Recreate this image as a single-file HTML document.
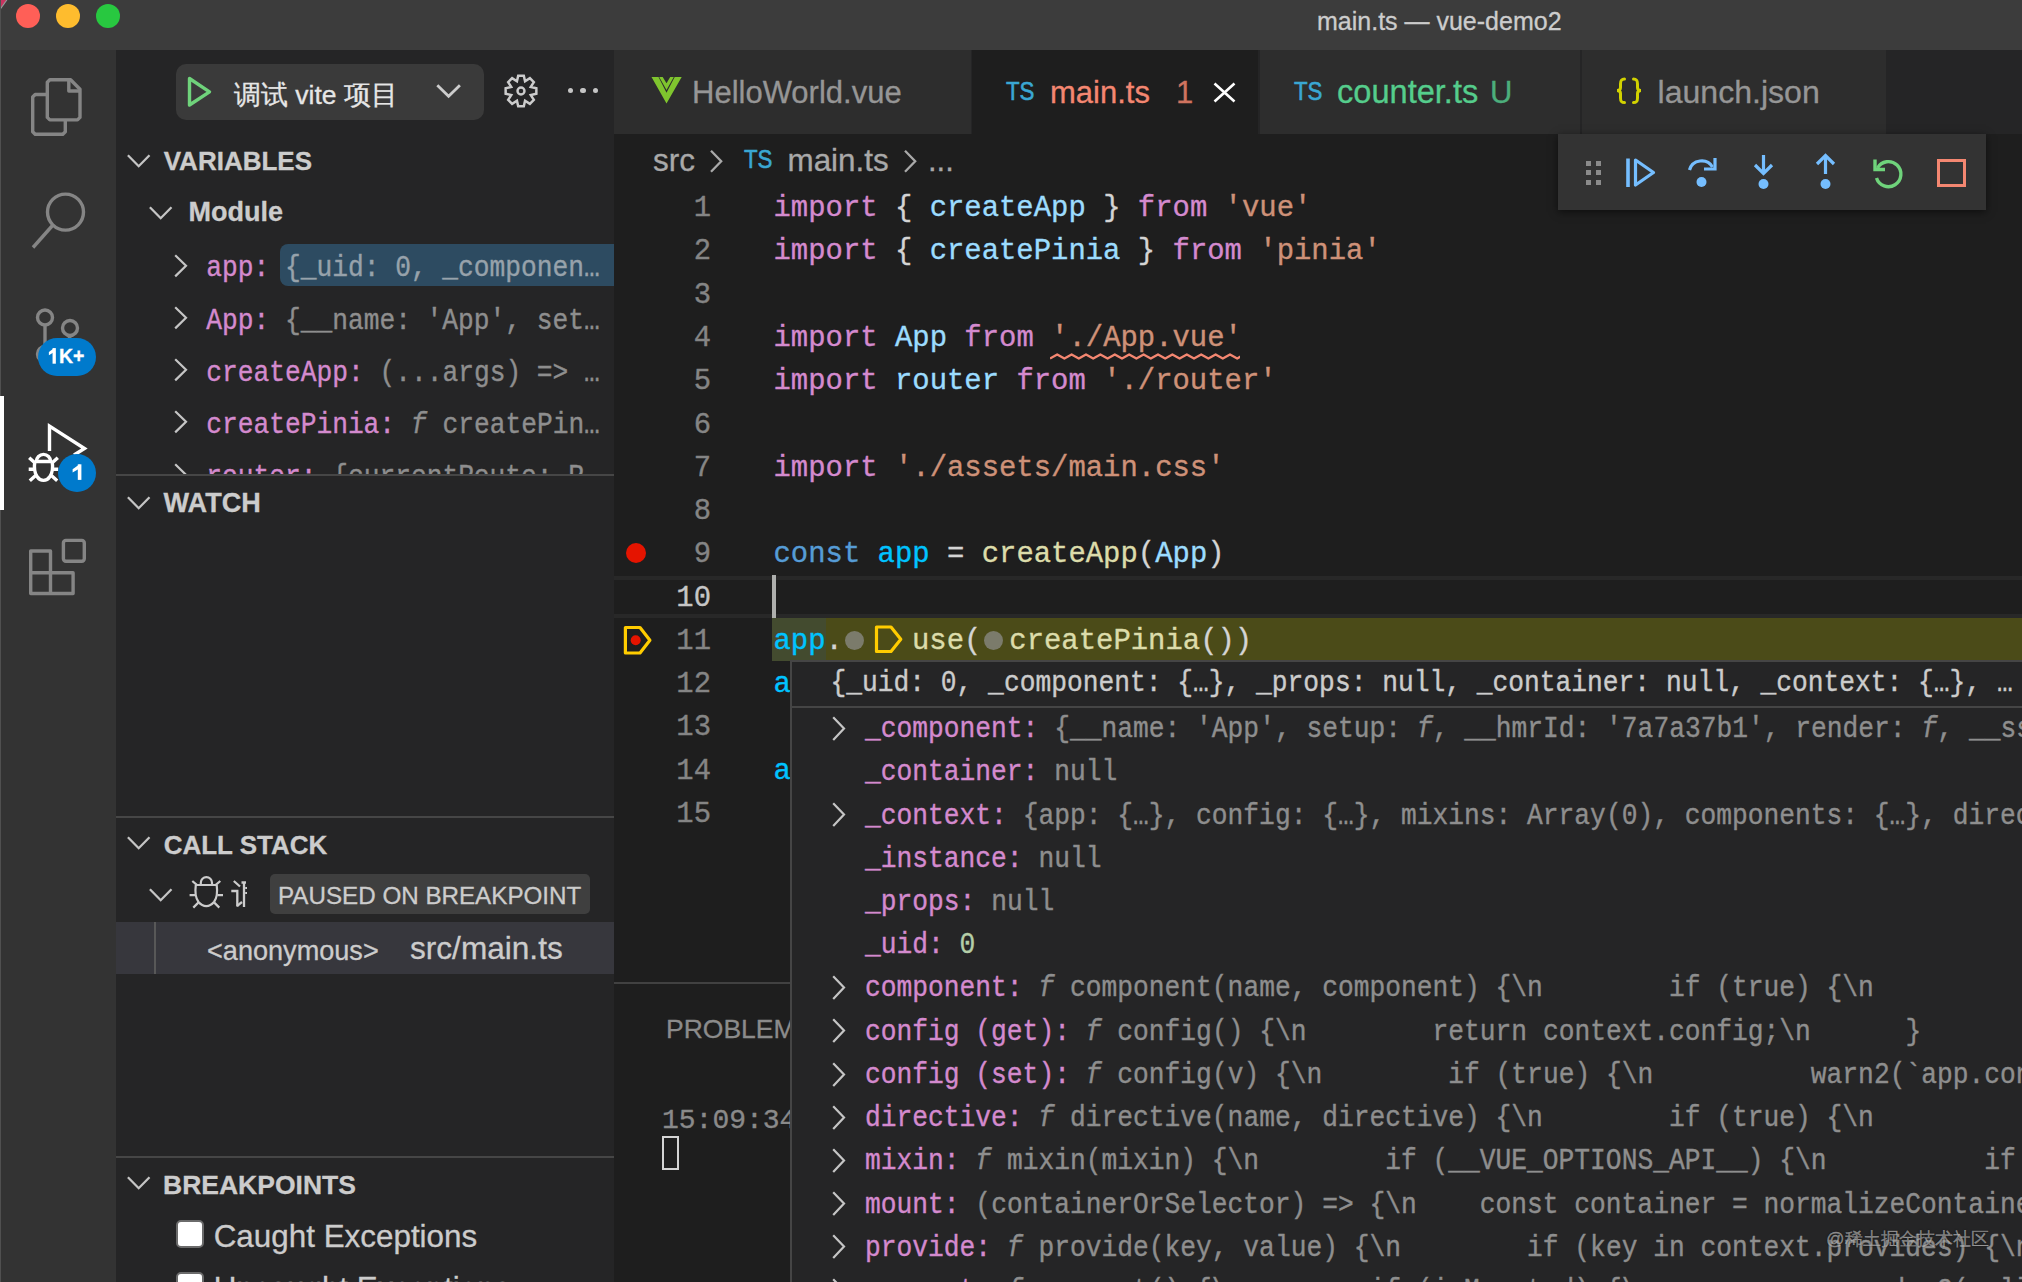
<!DOCTYPE html><html><head><meta charset="utf-8"><title>main.ts — vue-demo2</title><style>
html,body{margin:0;padding:0;}body{width:2022px;height:1282px;overflow:hidden;position:relative;background:#1e1e1e;}
.t{position:absolute;white-space:pre;}.s{font-family:"Liberation Sans",sans-serif;-webkit-text-stroke:0.3px currentColor;}.m{font-family:"Liberation Mono",monospace;-webkit-text-stroke:0.35px currentColor;}.r{position:absolute;}
</style></head><body>
<div class="r" style="left:0px;top:0px;width:2022px;height:50px;background:#3c3c3c;"></div>
<svg class="r" style="left:0px;top:0px;" width="12" height="12" viewBox="0 0 12 12"><polygon points="0,0 6.5,0 0,9" fill="#c8325f"/><path d="M6.8 0 L0 9.5" stroke="#9a9a9a" stroke-width="1.2"/></svg>
<div class="r" style="left:0px;top:50px;width:116px;height:1232px;background:#333333;"></div>
<div class="r" style="left:116px;top:50px;width:498px;height:1232px;background:#252526;"></div>
<div class="r" style="left:614px;top:50px;width:1408px;height:84px;background:#252526;"></div>
<div class="r" style="left:614px;top:134px;width:1408px;height:1148px;background:#1e1e1e;"></div>
<div class="r" style="left:0px;top:0px;width:1px;height:1282px;background:#505050;"></div>
<div class="r" style="left:16px;top:4px;width:24px;height:24px;border-radius:50%;background:#ff5f57;"></div>
<div class="r" style="left:56px;top:4px;width:24px;height:24px;border-radius:50%;background:#febc2e;"></div>
<div class="r" style="left:96px;top:4px;width:24px;height:24px;border-radius:50%;background:#28c840;"></div>
<div class="t s" style="left:1317.00px;top:8.93px;font-size:25px;line-height:25px;color:#cccccc;">main.ts — vue-demo2</div>
<div class="r" style="left:614px;top:50px;width:356.5px;height:84px;background:#2d2d2d;"></div>
<div class="r" style="left:972px;top:50px;width:285.5px;height:84px;background:#1e1e1e;"></div>
<div class="r" style="left:1260px;top:50px;width:320px;height:84px;background:#2d2d2d;"></div>
<div class="r" style="left:1582px;top:50px;width:304px;height:84px;background:#2d2d2d;"></div>
<div class="t s" style="left:692.00px;top:76.95px;font-size:31px;line-height:31px;color:#969696;">HelloWorld.vue</div>
<div class="t s" style="left:1050.00px;top:76.95px;font-size:31px;line-height:31px;color:#f48771;">main.ts</div>
<div class="t s" style="left:1176.00px;top:76.95px;font-size:31px;line-height:31px;color:#d0735f;">1</div>
<div class="t s" style="left:1337.00px;top:75.80px;font-size:32.6px;line-height:32.6px;color:#55cd8c;">counter.ts</div>
<div class="t s" style="left:1490.00px;top:77.15px;font-size:31px;line-height:31px;color:#4cae7c;">U</div>
<div class="t s" style="left:1657.50px;top:76.02px;font-size:32.1px;line-height:32.1px;color:#969696;">launch.json</div>
<div class="t s" style="left:653.00px;top:145.03px;font-size:31.5px;line-height:31.5px;color:#a9a9a9;">src</div>
<div class="t s" style="left:787.50px;top:145.11px;font-size:31.4px;line-height:31.4px;color:#a9a9a9;">main.ts</div>
<div class="t s" style="left:928.00px;top:145.45px;font-size:31px;line-height:31px;color:#a9a9a9;">...</div>
<div class="r" style="left:176px;top:64px;width:308px;height:56px;background:#3a3a3a;border-radius:10px;"></div>
<div class="t s" style="left:234.00px;top:82.06px;font-size:26.5px;line-height:26.5px;color:#e6e6e6;">调试 vite 项目</div>
<div class="t s" style="left:163.70px;top:147.99px;font-size:26px;line-height:26px;color:#cccccc;font-weight:700;">VARIABLES</div>
<div class="t s" style="left:188.50px;top:199.14px;font-size:27px;line-height:27px;color:#cccccc;font-weight:700;">Module</div>
<div class="r" style="left:116px;top:474px;width:498px;height:2px;background:#464646;"></div>
<div class="t s" style="left:163.50px;top:489.35px;font-size:27.1px;line-height:27.1px;color:#cccccc;font-weight:700;">WATCH</div>
<div class="r" style="left:116px;top:816px;width:498px;height:2px;background:#464646;"></div>
<div class="t s" style="left:163.70px;top:832.39px;font-size:26px;line-height:26px;color:#cccccc;font-weight:700;">CALL STACK</div>
<div class="r" style="left:270px;top:874px;width:320px;height:40px;background:#3f3f3f;border-radius:5px;"></div>
<div class="t s" style="left:278.00px;top:883.51px;font-size:24.2px;line-height:24.2px;color:#cccccc;">PAUSED ON BREAKPOINT</div>
<div class="r" style="left:116px;top:922px;width:498px;height:52px;background:#37373d;"></div>
<div class="r" style="left:154px;top:922px;width:2px;height:52px;background:#585858;"></div>
<div class="t s" style="left:207.00px;top:936.55px;font-size:27.1px;line-height:27.1px;color:#cccccc;">&lt;anonymous&gt;</div>
<div class="t s" style="left:410.00px;top:932.74px;font-size:31.6px;line-height:31.6px;color:#cccccc;">src/main.ts</div>
<div class="r" style="left:116px;top:1156px;width:498px;height:2px;background:#464646;"></div>
<div class="t s" style="left:163.00px;top:1171.96px;font-size:26.5px;line-height:26.5px;color:#cccccc;font-weight:700;">BREAKPOINTS</div>
<div class="t s" style="left:213.70px;top:1221.41px;font-size:31.4px;line-height:31.4px;color:#cccccc;">Caught Exceptions</div>
<div class="t s" style="left:213.70px;top:1273.41px;font-size:31.4px;line-height:31.4px;color:#cccccc;">Uncaught Exceptions</div>
<div class="r" style="left:176px;top:1220px;width:24px;height:24px;background:#fff;border:2px solid #6b6b6b;border-radius:5px;"></div>
<div class="r" style="left:176px;top:1272px;width:24px;height:24px;background:#fff;border:2px solid #6b6b6b;border-radius:5px;"></div>
<div class="r" style="left:614px;top:576px;width:1408px;height:3.6px;background:#282828;"></div>
<div class="r" style="left:614px;top:614px;width:1408px;height:3.8px;background:#282828;"></div>
<div class="r" style="left:772.2px;top:618.0px;width:1249.8px;height:43.27px;background:#4b4b18;"></div>
<div class="r" style="left:772.2px;top:618.0px;width:53.39999999999998px;height:43.27px;background:#434b2f;"></div>
<div class="t m" style="left:773.50px;top:195.15px;font-size:28.91px;line-height:28.91px;color:#d48ace;">import</div>
<div class="t m" style="left:894.95px;top:195.15px;font-size:28.91px;line-height:28.91px;color:#d4d4d4;">{</div>
<div class="t m" style="left:929.65px;top:195.15px;font-size:28.91px;line-height:28.91px;color:#9cdcfe;">createApp</div>
<div class="t m" style="left:1103.15px;top:195.15px;font-size:28.91px;line-height:28.91px;color:#d4d4d4;">}</div>
<div class="t m" style="left:1137.85px;top:195.15px;font-size:28.91px;line-height:28.91px;color:#d48ace;">from</div>
<div class="t m" style="left:1224.60px;top:195.15px;font-size:28.91px;line-height:28.91px;color:#ce9178;">&#x27;vue&#x27;</div>
<div class="t m" style="left:773.50px;top:238.42px;font-size:28.91px;line-height:28.91px;color:#d48ace;">import</div>
<div class="t m" style="left:894.95px;top:238.42px;font-size:28.91px;line-height:28.91px;color:#d4d4d4;">{</div>
<div class="t m" style="left:929.65px;top:238.42px;font-size:28.91px;line-height:28.91px;color:#9cdcfe;">createPinia</div>
<div class="t m" style="left:1137.85px;top:238.42px;font-size:28.91px;line-height:28.91px;color:#d4d4d4;">}</div>
<div class="t m" style="left:1172.55px;top:238.42px;font-size:28.91px;line-height:28.91px;color:#d48ace;">from</div>
<div class="t m" style="left:1259.30px;top:238.42px;font-size:28.91px;line-height:28.91px;color:#ce9178;">&#x27;pinia&#x27;</div>
<div class="t m" style="left:773.50px;top:324.96px;font-size:28.91px;line-height:28.91px;color:#d48ace;">import</div>
<div class="t m" style="left:894.95px;top:324.96px;font-size:28.91px;line-height:28.91px;color:#9cdcfe;">App</div>
<div class="t m" style="left:964.35px;top:324.96px;font-size:28.91px;line-height:28.91px;color:#d48ace;">from</div>
<div class="t m" style="left:1051.10px;top:324.96px;font-size:28.91px;line-height:28.91px;color:#ce9178;">&#x27;./App.vue&#x27;</div>
<div class="t m" style="left:773.50px;top:368.23px;font-size:28.91px;line-height:28.91px;color:#d48ace;">import</div>
<div class="t m" style="left:894.95px;top:368.23px;font-size:28.91px;line-height:28.91px;color:#9cdcfe;">router</div>
<div class="t m" style="left:1016.40px;top:368.23px;font-size:28.91px;line-height:28.91px;color:#d48ace;">from</div>
<div class="t m" style="left:1103.15px;top:368.23px;font-size:28.91px;line-height:28.91px;color:#ce9178;">&#x27;./router&#x27;</div>
<div class="t m" style="left:773.50px;top:454.77px;font-size:28.91px;line-height:28.91px;color:#d48ace;">import</div>
<div class="t m" style="left:894.95px;top:454.77px;font-size:28.91px;line-height:28.91px;color:#ce9178;">&#x27;./assets/main.css&#x27;</div>
<div class="t m" style="left:773.50px;top:541.31px;font-size:28.91px;line-height:28.91px;color:#569cd6;">const</div>
<div class="t m" style="left:877.60px;top:541.31px;font-size:28.91px;line-height:28.91px;color:#00c3ff;">app</div>
<div class="t m" style="left:947.00px;top:541.31px;font-size:28.91px;line-height:28.91px;color:#d4d4d4;">=</div>
<div class="t m" style="left:981.70px;top:541.31px;font-size:28.91px;line-height:28.91px;color:#dcdcaa;">createApp</div>
<div class="t m" style="left:1137.85px;top:541.31px;font-size:28.91px;line-height:28.91px;color:#d4d4d4;">(</div>
<div class="t m" style="left:1155.20px;top:541.31px;font-size:28.91px;line-height:28.91px;color:#9cdcfe;">App</div>
<div class="t m" style="left:1207.25px;top:541.31px;font-size:28.91px;line-height:28.91px;color:#d4d4d4;">)</div>
<div class="t m" style="left:773.50px;top:671.12px;font-size:28.91px;line-height:28.91px;color:#00c3ff;">a</div>
<div class="t m" style="left:773.50px;top:757.66px;font-size:28.91px;line-height:28.91px;color:#00c3ff;">a</div>
<div class="t m" style="left:773.50px;top:627.85px;font-size:28.91px;line-height:28.91px;color:#00c3ff;">app</div>
<div class="t m" style="left:825.55px;top:627.85px;font-size:28.91px;line-height:28.91px;color:#d4d4d4;">.</div>
<div class="t m" style="left:912.00px;top:627.85px;font-size:28.91px;line-height:28.91px;color:#dcdcaa;">use</div>
<div class="t m" style="left:964.05px;top:627.85px;font-size:28.91px;line-height:28.91px;color:#d4d4d4;">(</div>
<div class="t m" style="left:1009.30px;top:627.85px;font-size:28.91px;line-height:28.91px;color:#dcdcaa;">createPinia</div>
<div class="t m" style="left:1200.15px;top:627.85px;font-size:28.91px;line-height:28.91px;color:#d4d4d4;">())</div>
<div class="t m" style="left:511px;width:200px;text-align:right;top:195.15px;font-size:28.91px;line-height:28.91px;color:#858585;">1</div>
<div class="t m" style="left:511px;width:200px;text-align:right;top:238.42px;font-size:28.91px;line-height:28.91px;color:#858585;">2</div>
<div class="t m" style="left:511px;width:200px;text-align:right;top:281.69px;font-size:28.91px;line-height:28.91px;color:#858585;">3</div>
<div class="t m" style="left:511px;width:200px;text-align:right;top:324.96px;font-size:28.91px;line-height:28.91px;color:#858585;">4</div>
<div class="t m" style="left:511px;width:200px;text-align:right;top:368.23px;font-size:28.91px;line-height:28.91px;color:#858585;">5</div>
<div class="t m" style="left:511px;width:200px;text-align:right;top:411.50px;font-size:28.91px;line-height:28.91px;color:#858585;">6</div>
<div class="t m" style="left:511px;width:200px;text-align:right;top:454.77px;font-size:28.91px;line-height:28.91px;color:#858585;">7</div>
<div class="t m" style="left:511px;width:200px;text-align:right;top:498.04px;font-size:28.91px;line-height:28.91px;color:#858585;">8</div>
<div class="t m" style="left:511px;width:200px;text-align:right;top:541.31px;font-size:28.91px;line-height:28.91px;color:#858585;">9</div>
<div class="t m" style="left:511px;width:200px;text-align:right;top:584.58px;font-size:28.91px;line-height:28.91px;color:#c6c6c6;">10</div>
<div class="t m" style="left:511px;width:200px;text-align:right;top:627.85px;font-size:28.91px;line-height:28.91px;color:#858585;">11</div>
<div class="t m" style="left:511px;width:200px;text-align:right;top:671.12px;font-size:28.91px;line-height:28.91px;color:#858585;">12</div>
<div class="t m" style="left:511px;width:200px;text-align:right;top:714.39px;font-size:28.91px;line-height:28.91px;color:#858585;">13</div>
<div class="t m" style="left:511px;width:200px;text-align:right;top:757.66px;font-size:28.91px;line-height:28.91px;color:#858585;">14</div>
<div class="t m" style="left:511px;width:200px;text-align:right;top:800.93px;font-size:28.91px;line-height:28.91px;color:#858585;">15</div>
<div class="r" style="left:772.2px;top:574.73px;width:3.5px;height:43.27px;background:#aeafad;"></div>
<div class="r" style="left:626px;top:542.5px;width:20px;height:20px;border-radius:50%;background:#e51400;"></div>
<svg class="r" style="left:620px;top:622px;" width="36" height="38" viewBox="0 0 36 38"><path d="M5.4 5.5 H20 L29.9 18.25 L20 31 H5.4 Z" fill="none" stroke="#ffcc00" stroke-width="3.2" stroke-linejoin="round"/><circle cx="15.7" cy="18.2" r="5" fill="#e51400"/></svg>
<div class="r" style="left:845.4px;top:631px;width:19px;height:19px;border-radius:50%;background:#7b7b6b;"></div>
<div class="r" style="left:984px;top:631px;width:19px;height:19px;border-radius:50%;background:#7b7b6b;"></div>
<svg class="r" style="left:872px;top:622px;" width="36" height="36" viewBox="0 0 36 36"><path d="M4.5 5 H19 L28.8 17.25 L19 29.5 H4.5 Z" fill="none" stroke="#ffcc00" stroke-width="3.2" stroke-linejoin="round"/></svg>
<svg class="r" style="left:1050px;top:353px;overflow:hidden;" width="190" height="8" viewBox="0 0 190 8"><path d="M0 5.5 L7.20 1.5 L14.40 5.5 L21.60 1.5 L28.80 5.5 L36.00 1.5 L43.20 5.5 L50.40 1.5 L57.60 5.5 L64.80 1.5 L72.00 5.5 L79.20 1.5 L86.40 5.5 L93.60 1.5 L100.80 5.5 L108.00 1.5 L115.20 5.5 L122.40 1.5 L129.60 5.5 L136.80 1.5 L144.00 5.5 L151.20 1.5 L158.40 5.5 L165.60 1.5 L172.80 5.5 L180.00 1.5 L187.20 5.5 L194.40 1.5" fill="none" stroke="#f48771" stroke-width="2.4" stroke-linejoin="round"/></svg>
<div class="r" style="left:614px;top:982px;width:176px;height:2px;background:#414141;"></div>
<div class="t s" style="left:666.00px;top:1015.86px;font-size:26.5px;line-height:26.5px;color:#8b8b8b;">PROBLEM</div>
<div class="t m" style="left:662.00px;top:1107.15px;font-size:28px;line-height:28px;color:#8a8a8a;">15:09:34</div>
<div class="r" style="left:661.8px;top:1136.3px;width:17.3px;height:33.4px;box-sizing:border-box;border:2px solid #d4d4d4;"></div>
<div class="r" style="left:790px;top:660px;width:1242px;height:632px;background:#252526;box-sizing:border-box;border:2px solid #454545;"></div>
<div class="r" style="left:790px;top:705.5px;width:1232px;height:2px;background:#454545;"></div>
<div class="t m" style="left:830.50px;top:671.37px;font-size:26.279056143205857px;line-height:26.279056143205857px;color:#cccccc;transform:scaleY(1.09);transform-origin:0 20.13px;">{_uid: 0, _component: {…}, _props: null, _container: null, _context: {…}, …</div>
<div class="t m" style="left:865.00px;top:717.17px;font-size:26.279056143205857px;line-height:26.279056143205857px;color:#d48ace;transform:scaleY(1.09);transform-origin:0 20.13px;">_component:</div>
<div class="t m" style="left:1038.47px;top:717.17px;font-size:26.279056143205857px;line-height:26.279056143205857px;color:#8e8e8e;transform:scaleY(1.09);transform-origin:0 20.13px;"> {__name: &#x27;App&#x27;, setup: </div>
<div class="t m" style="left:1416.95px;top:717.17px;font-size:26.279056143205857px;line-height:26.279056143205857px;color:#8e8e8e;font-style:italic;transform:scaleY(1.09);transform-origin:0 20.13px;">f</div>
<div class="t m" style="left:1432.72px;top:717.17px;font-size:26.279056143205857px;line-height:26.279056143205857px;color:#8e8e8e;transform:scaleY(1.09);transform-origin:0 20.13px;">, __hmrId: &#x27;7a7a37b1&#x27;, render: </div>
<div class="t m" style="left:1921.59px;top:717.17px;font-size:26.279056143205857px;line-height:26.279056143205857px;color:#8e8e8e;font-style:italic;transform:scaleY(1.09);transform-origin:0 20.13px;">f</div>
<div class="t m" style="left:1937.36px;top:717.17px;font-size:26.279056143205857px;line-height:26.279056143205857px;color:#8e8e8e;transform:scaleY(1.09);transform-origin:0 20.13px;">, __ssrCssVars</div>
<svg class="r" style="left:832px;top:715.8px;" width="15" height="26" viewBox="0 0 15 26"><path d="M1.2 1.2 L12 12.6 L1.2 24" fill="none" stroke="#c5c5c5" stroke-width="2.2"/></svg>
<div class="t m" style="left:865.00px;top:760.39px;font-size:26.279056143205857px;line-height:26.279056143205857px;color:#d48ace;transform:scaleY(1.09);transform-origin:0 20.13px;">_container:</div>
<div class="t m" style="left:1038.47px;top:760.39px;font-size:26.279056143205857px;line-height:26.279056143205857px;color:#8e8e8e;transform:scaleY(1.09);transform-origin:0 20.13px;"> null</div>
<div class="t m" style="left:865.00px;top:803.61px;font-size:26.279056143205857px;line-height:26.279056143205857px;color:#d48ace;transform:scaleY(1.09);transform-origin:0 20.13px;">_context:</div>
<div class="t m" style="left:1006.93px;top:803.61px;font-size:26.279056143205857px;line-height:26.279056143205857px;color:#8e8e8e;transform:scaleY(1.09);transform-origin:0 20.13px;"> {app: {…}, config: {…}, mixins: Array(0), components: {…}, directives: {…}</div>
<svg class="r" style="left:832px;top:802.24px;" width="15" height="26" viewBox="0 0 15 26"><path d="M1.2 1.2 L12 12.6 L1.2 24" fill="none" stroke="#c5c5c5" stroke-width="2.2"/></svg>
<div class="t m" style="left:865.00px;top:846.83px;font-size:26.279056143205857px;line-height:26.279056143205857px;color:#d48ace;transform:scaleY(1.09);transform-origin:0 20.13px;">_instance:</div>
<div class="t m" style="left:1022.70px;top:846.83px;font-size:26.279056143205857px;line-height:26.279056143205857px;color:#8e8e8e;transform:scaleY(1.09);transform-origin:0 20.13px;"> null</div>
<div class="t m" style="left:865.00px;top:890.05px;font-size:26.279056143205857px;line-height:26.279056143205857px;color:#d48ace;transform:scaleY(1.09);transform-origin:0 20.13px;">_props:</div>
<div class="t m" style="left:975.39px;top:890.05px;font-size:26.279056143205857px;line-height:26.279056143205857px;color:#8e8e8e;transform:scaleY(1.09);transform-origin:0 20.13px;"> null</div>
<div class="t m" style="left:865.00px;top:933.27px;font-size:26.279056143205857px;line-height:26.279056143205857px;color:#d48ace;transform:scaleY(1.09);transform-origin:0 20.13px;">_uid:</div>
<div class="t m" style="left:943.85px;top:933.27px;font-size:26.279056143205857px;line-height:26.279056143205857px;color:#8e8e8e;transform:scaleY(1.09);transform-origin:0 20.13px;"> </div>
<div class="t m" style="left:959.62px;top:933.27px;font-size:26.279056143205857px;line-height:26.279056143205857px;color:#b5cea8;transform:scaleY(1.09);transform-origin:0 20.13px;">0</div>
<div class="t m" style="left:865.00px;top:976.49px;font-size:26.279056143205857px;line-height:26.279056143205857px;color:#d48ace;transform:scaleY(1.09);transform-origin:0 20.13px;">component:</div>
<div class="t m" style="left:1022.70px;top:976.49px;font-size:26.279056143205857px;line-height:26.279056143205857px;color:#8e8e8e;transform:scaleY(1.09);transform-origin:0 20.13px;"> </div>
<div class="t m" style="left:1038.47px;top:976.49px;font-size:26.279056143205857px;line-height:26.279056143205857px;color:#8e8e8e;font-style:italic;transform:scaleY(1.09);transform-origin:0 20.13px;">f</div>
<div class="t m" style="left:1054.24px;top:976.49px;font-size:26.279056143205857px;line-height:26.279056143205857px;color:#8e8e8e;transform:scaleY(1.09);transform-origin:0 20.13px;"> component(name, component) {\n        if (true) {\n          validateComponentName</div>
<svg class="r" style="left:832px;top:975.1199999999999px;" width="15" height="26" viewBox="0 0 15 26"><path d="M1.2 1.2 L12 12.6 L1.2 24" fill="none" stroke="#c5c5c5" stroke-width="2.2"/></svg>
<div class="t m" style="left:865.00px;top:1019.71px;font-size:26.279056143205857px;line-height:26.279056143205857px;color:#d48ace;transform:scaleY(1.09);transform-origin:0 20.13px;">config (get):</div>
<div class="t m" style="left:1070.01px;top:1019.71px;font-size:26.279056143205857px;line-height:26.279056143205857px;color:#8e8e8e;transform:scaleY(1.09);transform-origin:0 20.13px;"> </div>
<div class="t m" style="left:1085.78px;top:1019.71px;font-size:26.279056143205857px;line-height:26.279056143205857px;color:#8e8e8e;font-style:italic;transform:scaleY(1.09);transform-origin:0 20.13px;">f</div>
<div class="t m" style="left:1101.55px;top:1019.71px;font-size:26.279056143205857px;line-height:26.279056143205857px;color:#8e8e8e;transform:scaleY(1.09);transform-origin:0 20.13px;"> config() {\n        return context.config;\n      }</div>
<svg class="r" style="left:832px;top:1018.3399999999999px;" width="15" height="26" viewBox="0 0 15 26"><path d="M1.2 1.2 L12 12.6 L1.2 24" fill="none" stroke="#c5c5c5" stroke-width="2.2"/></svg>
<div class="t m" style="left:865.00px;top:1062.93px;font-size:26.279056143205857px;line-height:26.279056143205857px;color:#d48ace;transform:scaleY(1.09);transform-origin:0 20.13px;">config (set):</div>
<div class="t m" style="left:1070.01px;top:1062.93px;font-size:26.279056143205857px;line-height:26.279056143205857px;color:#8e8e8e;transform:scaleY(1.09);transform-origin:0 20.13px;"> </div>
<div class="t m" style="left:1085.78px;top:1062.93px;font-size:26.279056143205857px;line-height:26.279056143205857px;color:#8e8e8e;font-style:italic;transform:scaleY(1.09);transform-origin:0 20.13px;">f</div>
<div class="t m" style="left:1101.55px;top:1062.93px;font-size:26.279056143205857px;line-height:26.279056143205857px;color:#8e8e8e;transform:scaleY(1.09);transform-origin:0 20.13px;"> config(v) {\n        if (true) {\n          warn2(`app.config cannot be replaced</div>
<svg class="r" style="left:832px;top:1061.56px;" width="15" height="26" viewBox="0 0 15 26"><path d="M1.2 1.2 L12 12.6 L1.2 24" fill="none" stroke="#c5c5c5" stroke-width="2.2"/></svg>
<div class="t m" style="left:865.00px;top:1106.15px;font-size:26.279056143205857px;line-height:26.279056143205857px;color:#d48ace;transform:scaleY(1.09);transform-origin:0 20.13px;">directive:</div>
<div class="t m" style="left:1022.70px;top:1106.15px;font-size:26.279056143205857px;line-height:26.279056143205857px;color:#8e8e8e;transform:scaleY(1.09);transform-origin:0 20.13px;"> </div>
<div class="t m" style="left:1038.47px;top:1106.15px;font-size:26.279056143205857px;line-height:26.279056143205857px;color:#8e8e8e;font-style:italic;transform:scaleY(1.09);transform-origin:0 20.13px;">f</div>
<div class="t m" style="left:1054.24px;top:1106.15px;font-size:26.279056143205857px;line-height:26.279056143205857px;color:#8e8e8e;transform:scaleY(1.09);transform-origin:0 20.13px;"> directive(name, directive) {\n        if (true) {\n          validateDirectiveName</div>
<svg class="r" style="left:832px;top:1104.78px;" width="15" height="26" viewBox="0 0 15 26"><path d="M1.2 1.2 L12 12.6 L1.2 24" fill="none" stroke="#c5c5c5" stroke-width="2.2"/></svg>
<div class="t m" style="left:865.00px;top:1149.37px;font-size:26.279056143205857px;line-height:26.279056143205857px;color:#d48ace;transform:scaleY(1.09);transform-origin:0 20.13px;">mixin:</div>
<div class="t m" style="left:959.62px;top:1149.37px;font-size:26.279056143205857px;line-height:26.279056143205857px;color:#8e8e8e;transform:scaleY(1.09);transform-origin:0 20.13px;"> </div>
<div class="t m" style="left:975.39px;top:1149.37px;font-size:26.279056143205857px;line-height:26.279056143205857px;color:#8e8e8e;font-style:italic;transform:scaleY(1.09);transform-origin:0 20.13px;">f</div>
<div class="t m" style="left:991.16px;top:1149.37px;font-size:26.279056143205857px;line-height:26.279056143205857px;color:#8e8e8e;transform:scaleY(1.09);transform-origin:0 20.13px;"> mixin(mixin) {\n        if (__VUE_OPTIONS_API__) {\n          if (!context.mixins</div>
<svg class="r" style="left:832px;top:1148.0px;" width="15" height="26" viewBox="0 0 15 26"><path d="M1.2 1.2 L12 12.6 L1.2 24" fill="none" stroke="#c5c5c5" stroke-width="2.2"/></svg>
<div class="t m" style="left:865.00px;top:1192.59px;font-size:26.279056143205857px;line-height:26.279056143205857px;color:#d48ace;transform:scaleY(1.09);transform-origin:0 20.13px;">mount:</div>
<div class="t m" style="left:959.62px;top:1192.59px;font-size:26.279056143205857px;line-height:26.279056143205857px;color:#8e8e8e;transform:scaleY(1.09);transform-origin:0 20.13px;"> (containerOrSelector) =&gt; {\n    const container = normalizeContainer(containerOrSelector)</div>
<svg class="r" style="left:832px;top:1191.2199999999998px;" width="15" height="26" viewBox="0 0 15 26"><path d="M1.2 1.2 L12 12.6 L1.2 24" fill="none" stroke="#c5c5c5" stroke-width="2.2"/></svg>
<div class="t m" style="left:865.00px;top:1235.81px;font-size:26.279056143205857px;line-height:26.279056143205857px;color:#d48ace;transform:scaleY(1.09);transform-origin:0 20.13px;">provide:</div>
<div class="t m" style="left:991.16px;top:1235.81px;font-size:26.279056143205857px;line-height:26.279056143205857px;color:#8e8e8e;transform:scaleY(1.09);transform-origin:0 20.13px;"> </div>
<div class="t m" style="left:1006.93px;top:1235.81px;font-size:26.279056143205857px;line-height:26.279056143205857px;color:#8e8e8e;font-style:italic;transform:scaleY(1.09);transform-origin:0 20.13px;">f</div>
<div class="t m" style="left:1022.70px;top:1235.81px;font-size:26.279056143205857px;line-height:26.279056143205857px;color:#8e8e8e;transform:scaleY(1.09);transform-origin:0 20.13px;"> provide(key, value) {\n        if (key in context.provides) {\n          warn2</div>
<svg class="r" style="left:832px;top:1234.44px;" width="15" height="26" viewBox="0 0 15 26"><path d="M1.2 1.2 L12 12.6 L1.2 24" fill="none" stroke="#c5c5c5" stroke-width="2.2"/></svg>
<div class="t m" style="left:865.00px;top:1279.03px;font-size:26.279056143205857px;line-height:26.279056143205857px;color:#d48ace;transform:scaleY(1.09);transform-origin:0 20.13px;">unmount:</div>
<div class="t m" style="left:991.16px;top:1279.03px;font-size:26.279056143205857px;line-height:26.279056143205857px;color:#8e8e8e;transform:scaleY(1.09);transform-origin:0 20.13px;"> </div>
<div class="t m" style="left:1006.93px;top:1279.03px;font-size:26.279056143205857px;line-height:26.279056143205857px;color:#8e8e8e;font-style:italic;transform:scaleY(1.09);transform-origin:0 20.13px;">f</div>
<div class="t m" style="left:1022.70px;top:1279.03px;font-size:26.279056143205857px;line-height:26.279056143205857px;color:#8e8e8e;transform:scaleY(1.09);transform-origin:0 20.13px;"> unmount() {\n        if (isMounted) {\n            render2(null, app._container);</div>
<svg class="r" style="left:832px;top:1277.6599999999999px;" width="15" height="26" viewBox="0 0 15 26"><path d="M1.2 1.2 L12 12.6 L1.2 24" fill="none" stroke="#c5c5c5" stroke-width="2.2"/></svg>
<div class="r" style="left:1558px;top:134px;width:428px;height:76px;background:#333333;box-shadow:0 2px 8px rgba(0,0,0,0.55);"></div>
<div class="r" style="left:1586.0px;top:160.5px;width:5px;height:5px;background:#8b8b8b;"></div>
<div class="r" style="left:1586.0px;top:170.0px;width:5px;height:5px;background:#8b8b8b;"></div>
<div class="r" style="left:1586.0px;top:179.5px;width:5px;height:5px;background:#8b8b8b;"></div>
<div class="r" style="left:1596.0px;top:160.5px;width:5px;height:5px;background:#8b8b8b;"></div>
<div class="r" style="left:1596.0px;top:170.0px;width:5px;height:5px;background:#8b8b8b;"></div>
<div class="r" style="left:1596.0px;top:179.5px;width:5px;height:5px;background:#8b8b8b;"></div>
<svg class="r" style="left:1624px;top:156px;" width="34" height="34" viewBox="0 0 34 34"><path d="M4 2.5 V31" stroke="#75beff" stroke-width="3.6" fill="none"/><path d="M11.5 4 L29.5 16.5 L11.5 29 Z" stroke="#75beff" stroke-width="3.2" fill="none" stroke-linejoin="round"/></svg>
<svg class="r" style="left:1684px;top:154px;" width="36" height="36" viewBox="0 0 36 36"><path d="M5.5 16 A12.5 12 0 0 1 28.5 13" stroke="#75beff" stroke-width="3.2" fill="none"/><path d="M31 4 V15 H20" stroke="#75beff" stroke-width="3.2" fill="none"/><circle cx="17.5" cy="28" r="5" fill="#75beff"/></svg>
<svg class="r" style="left:1750px;top:153px;" width="28" height="38" viewBox="0 0 28 38"><path d="M13.5 2 V20 M5 12 L13.5 20.5 L22 12" stroke="#75beff" stroke-width="3.2" fill="none"/><circle cx="13.5" cy="31" r="5" fill="#75beff"/></svg>
<svg class="r" style="left:1812px;top:153px;" width="28" height="38" viewBox="0 0 28 38"><path d="M13.5 21 V3 M5 11 L13.5 2.5 L22 11" stroke="#75beff" stroke-width="3.2" fill="none"/><circle cx="13.5" cy="31" r="5" fill="#75beff"/></svg>
<svg class="r" style="left:1871px;top:156px;" width="34" height="34" viewBox="0 0 34 34"><path d="M6.5 12 A12.5 12.5 0 1 1 5.5 22" stroke="#6fd37b" stroke-width="3.4" fill="none"/><path d="M4 3.5 V13.5 H14" stroke="#6fd37b" stroke-width="3.4" fill="none"/></svg>
<div class="r" style="left:1936.5px;top:158.5px;width:29px;height:28.5px;background:transparent;box-sizing:border-box;border:3.2px solid #f48771;"></div>
<svg class="r" style="left:650px;top:75px;" width="34" height="30" viewBox="0 0 34 30"><polygon points="1.5,2 8.5,2 16.5,17.8 24.7,2 31.7,2 16.5,28.4" fill="#7fc52e"/><polygon points="9.2,2 12.7,2 16.5,8.2 20.2,2 23.8,2 16.5,15" fill="#7fc52e"/></svg>
<div class="t s" style="left:1005.80px;top:79.04px;font-size:25px;line-height:25px;color:#3aa7d3;-webkit-text-stroke:0.6px #3aa7d3;transform:scaleX(0.89);transform-origin:0 0;">TS</div>
<div class="t s" style="left:1294.30px;top:79.04px;font-size:25px;line-height:25px;color:#3aa7d3;-webkit-text-stroke:0.6px #3aa7d3;transform:scaleX(0.89);transform-origin:0 0;">TS</div>
<svg class="r" style="left:1212px;top:81px;" width="25" height="23" viewBox="0 0 25 23"><path d="M2.5 2.5 L22.5 20.5 M22.5 2.5 L2.5 20.5" stroke="#ffffff" stroke-width="2.6" fill="none"/></svg>
<svg class="r" style="left:1612px;top:75px;" width="34" height="32" viewBox="0 0 34 32"><path d="M12.5 4 C9 4 8.5 6 8.5 9 V12.5 C8.5 14.5 7 15.5 5 15.5 C7 15.5 8.5 16.5 8.5 18.5 V23 C8.5 26 9 27.5 12.5 27.5" stroke="#d2d200" stroke-width="3" fill="none" stroke-linecap="round"/><path d="M21.5 4 C25 4 25.5 6 25.5 9 V12.5 C25.5 14.5 27 15.5 29 15.5 C27 15.5 25.5 16.5 25.5 18.5 V23 C25.5 26 25 27.5 21.5 27.5" stroke="#d2d200" stroke-width="3" fill="none" stroke-linecap="round"/></svg>
<div class="t s" style="left:744.30px;top:147.14px;font-size:25px;line-height:25px;color:#3aa7d3;-webkit-text-stroke:0.6px #3aa7d3;transform:scaleX(0.89);transform-origin:0 0;">TS</div>
<svg class="r" style="left:709.2px;top:148.5px;" width="15" height="25" viewBox="0 0 15 25"><path d="M2 1.8 L12.2 12.3 L2 22.8" stroke="#a9a9a9" stroke-width="2.3" fill="none"/></svg>
<svg class="r" style="left:902.5px;top:148.5px;" width="15" height="25" viewBox="0 0 15 25"><path d="M2 1.8 L12.2 12.3 L2 22.8" stroke="#a9a9a9" stroke-width="2.3" fill="none"/></svg>
<svg class="r" style="left:184px;top:74px;" width="30" height="36" viewBox="0 0 30 36"><path d="M5.5 4.5 L25.5 17.8 L5.5 31 Z" fill="none" stroke="#6fd37b" stroke-width="3.4" stroke-linejoin="round"/></svg>
<svg class="r" style="left:434.5px;top:83px;" width="28" height="17" viewBox="0 0 28 17"><path d="M2.3 2.3 L13.6 13.3 L24.9 2.3" stroke="#cccccc" stroke-width="2.8" fill="none"/></svg>
<svg class="r" style="left:502.8px;top:72.8px;" width="36" height="36" viewBox="0 0 36 36"><polygon points="13.94,8.21 15.21,2.65 20.79,2.65 22.06,8.21 26.88,5.17 30.83,9.12 27.79,13.94 33.35,15.21 33.35,20.79 27.79,22.06 30.83,26.88 26.88,30.83 22.06,27.79 20.79,33.35 15.21,33.35 13.94,27.79 9.12,30.83 5.17,26.88 8.21,22.06 2.65,20.79 2.65,15.21 8.21,13.94 5.17,9.12 9.12,5.17" fill="none" stroke="#cccccc" stroke-width="2.5" stroke-linejoin="miter"/><circle cx="18" cy="18" r="3.5" fill="none" stroke="#cccccc" stroke-width="2.4"/></svg>
<div class="r" style="left:567.9px;top:88.2px;width:5.2px;height:5.2px;border-radius:50%;background:#c5c5c5;"></div>
<div class="r" style="left:580.4px;top:88.2px;width:5.2px;height:5.2px;border-radius:50%;background:#c5c5c5;"></div>
<div class="r" style="left:592.9px;top:88.2px;width:5.2px;height:5.2px;border-radius:50%;background:#c5c5c5;"></div>
<svg class="r" style="left:126px;top:153px;" width="26" height="17" viewBox="0 0 26 17"><path d="M1.9 2.3 L12.7 13.2 L23.5 2.3" stroke="#c5c5c5" stroke-width="2.3" fill="none"/></svg>
<svg class="r" style="left:148px;top:205px;" width="26" height="17" viewBox="0 0 26 17"><path d="M1.9 2.3 L12.7 13.2 L23.5 2.3" stroke="#c5c5c5" stroke-width="2.3" fill="none"/></svg>
<svg class="r" style="left:126px;top:495px;" width="26" height="17" viewBox="0 0 26 17"><path d="M1.9 2.3 L12.7 13.2 L23.5 2.3" stroke="#c5c5c5" stroke-width="2.3" fill="none"/></svg>
<svg class="r" style="left:126px;top:835px;" width="26" height="17" viewBox="0 0 26 17"><path d="M1.9 2.3 L12.7 13.2 L23.5 2.3" stroke="#c5c5c5" stroke-width="2.3" fill="none"/></svg>
<svg class="r" style="left:148px;top:887px;" width="26" height="17" viewBox="0 0 26 17"><path d="M1.9 2.3 L12.7 13.2 L23.5 2.3" stroke="#c5c5c5" stroke-width="2.3" fill="none"/></svg>
<svg class="r" style="left:126px;top:1175px;" width="26" height="17" viewBox="0 0 26 17"><path d="M1.9 2.3 L12.7 13.2 L23.5 2.3" stroke="#c5c5c5" stroke-width="2.3" fill="none"/></svg>
<div class="r" style="left:116px;top:239px;width:498px;height:235px;overflow:hidden;">
<div class="r" style="left:164.2px;top:5.199999999999989px;width:400px;height:41.5px;background:#2d4b61;border-radius:8px;"></div>
<div class="t m" style="left:90.20px;top:17.39px;font-size:26.24572823433686px;line-height:26.24572823433686px;color:#d48ace;transform:scaleY(1.09);transform-origin:0 20.11px;">app:</div>
<div class="t m" style="left:153.20px;top:17.39px;font-size:26.24572823433686px;line-height:26.24572823433686px;color:#8e8e8e;transform:scaleY(1.09);transform-origin:0 20.11px;"> </div>
<div class="t m" style="left:168.95px;top:17.39px;font-size:26.24572823433686px;line-height:26.24572823433686px;color:#97a2ab;transform:scaleY(1.09);transform-origin:0 20.11px;">{_uid: 0, _componen…</div>
<svg class="r" style="left:58.30000000000001px;top:14.699999999999989px;" width="15" height="25" viewBox="0 0 15 25"><path d="M1.2 1.2 L12 11.8 L1.2 22.4" stroke="#c5c5c5" stroke-width="2.2" fill="none"/></svg>
<div class="t m" style="left:90.20px;top:69.59px;font-size:26.24572823433686px;line-height:26.24572823433686px;color:#d48ace;transform:scaleY(1.09);transform-origin:0 20.11px;">App:</div>
<div class="t m" style="left:153.20px;top:69.59px;font-size:26.24572823433686px;line-height:26.24572823433686px;color:#8e8e8e;transform:scaleY(1.09);transform-origin:0 20.11px;"> {__name: &#x27;App&#x27;, set…</div>
<svg class="r" style="left:58.30000000000001px;top:66.89999999999998px;" width="15" height="25" viewBox="0 0 15 25"><path d="M1.2 1.2 L12 11.8 L1.2 22.4" stroke="#c5c5c5" stroke-width="2.2" fill="none"/></svg>
<div class="t m" style="left:90.20px;top:121.79px;font-size:26.24572823433686px;line-height:26.24572823433686px;color:#d48ace;transform:scaleY(1.09);transform-origin:0 20.11px;">createApp:</div>
<div class="t m" style="left:247.70px;top:121.79px;font-size:26.24572823433686px;line-height:26.24572823433686px;color:#8e8e8e;transform:scaleY(1.09);transform-origin:0 20.11px;"> (...args) =&gt; …</div>
<svg class="r" style="left:58.30000000000001px;top:119.09999999999997px;" width="15" height="25" viewBox="0 0 15 25"><path d="M1.2 1.2 L12 11.8 L1.2 22.4" stroke="#c5c5c5" stroke-width="2.2" fill="none"/></svg>
<div class="t m" style="left:90.20px;top:173.99px;font-size:26.24572823433686px;line-height:26.24572823433686px;color:#d48ace;transform:scaleY(1.09);transform-origin:0 20.11px;">createPinia:</div>
<div class="t m" style="left:279.20px;top:173.99px;font-size:26.24572823433686px;line-height:26.24572823433686px;color:#8e8e8e;transform:scaleY(1.09);transform-origin:0 20.11px;"> </div>
<div class="t m" style="left:294.95px;top:173.99px;font-size:26.24572823433686px;line-height:26.24572823433686px;color:#8e8e8e;font-style:italic;transform:scaleY(1.09);transform-origin:0 20.11px;">f</div>
<div class="t m" style="left:310.70px;top:173.99px;font-size:26.24572823433686px;line-height:26.24572823433686px;color:#8e8e8e;transform:scaleY(1.09);transform-origin:0 20.11px;"> createPin…</div>
<svg class="r" style="left:58.30000000000001px;top:171.3px;" width="15" height="25" viewBox="0 0 15 25"><path d="M1.2 1.2 L12 11.8 L1.2 22.4" stroke="#c5c5c5" stroke-width="2.2" fill="none"/></svg>
<div class="t m" style="left:90.20px;top:226.19px;font-size:26.24572823433686px;line-height:26.24572823433686px;color:#d48ace;transform:scaleY(1.09);transform-origin:0 20.11px;">router:</div>
<div class="t m" style="left:200.45px;top:226.19px;font-size:26.24572823433686px;line-height:26.24572823433686px;color:#8e8e8e;transform:scaleY(1.09);transform-origin:0 20.11px;"> {currentRoute: R…</div>
<svg class="r" style="left:58.30000000000001px;top:223.5px;" width="15" height="25" viewBox="0 0 15 25"><path d="M1.2 1.2 L12 11.8 L1.2 22.4" stroke="#c5c5c5" stroke-width="2.2" fill="none"/></svg>
</div>
<svg class="r" style="left:188px;top:874px;" width="38" height="38" viewBox="0 0 38 38"><g fill="none" stroke="#cccccc" stroke-width="2.2"><path d="M12.8 11 V8.8 A5.6 5.6 0 0 1 24 8.8 V11"/><path d="M7.8 11 H28.7 M7.8 11 C7 17 7.5 24 10.5 28 C13 31 15.5 32.1 18.3 32.1 C21 32.1 23.5 31 26 28 C29 24 29.5 17 28.7 11"/><path d="M4.3 7 L8.8 10.9 M32.3 7 L27.8 10.9 M1.6 21.1 H7.2 M29.4 21.1 H35 M5.3 33.6 L10.3 28.6 M31.3 33.6 L26.3 28.6"/></g></svg>
<svg class="r" style="left:229px;top:877px;" width="20" height="34" viewBox="0 0 20 34"><g fill="none" stroke="#cccccc" stroke-width="2.3"><path d="M4.8 4 L11 9.5"/><path d="M2.3 14 H8.3 V29.5"/><path d="M8 29 L13 25"/><path d="M15 4.5 V30 M12.5 5.5 H17"/></g><rect x="16.2" y="10" width="1.8" height="2" fill="#cccccc"/><rect x="16.2" y="15" width="1.8" height="2" fill="#cccccc"/></svg>
<svg class="r" style="left:28px;top:74px;" width="58" height="66" viewBox="0 0 58 66"><g fill="none" stroke="#858585" stroke-width="3.4" stroke-linejoin="round"><path d="M21.8 5.8 H42.6 L52 15.2 V43.4 L49.5 45.9 H21.8 L19.3 43.4 V8.3 Z"/><path d="M40.8 6 V17 H51.8"/><path d="M19.3 20.5 H7.2 L4.7 23 V57.8 L7.2 60.3 H34.8 L37.3 57.8 V46"/></g></svg>
<svg class="r" style="left:28px;top:188px;" width="64" height="66" viewBox="0 0 64 66"><g fill="none" stroke="#858585" stroke-width="3.4"><circle cx="37.5" cy="24.1" r="18"/><path d="M24.5 37.5 L5 59.5"/></g></svg>
<svg class="r" style="left:28px;top:302px;" width="60" height="60" viewBox="0 0 60 60"><g fill="none" stroke="#858585" stroke-width="3.4"><circle cx="17" cy="15.5" r="7.5"/><circle cx="42" cy="26" r="7.5"/><path d="M17 23 V44"/><circle cx="17" cy="52" r="7.5"/><path d="M42 33.5 C42 42 30 42 22 46"/></g></svg>
<div class="r" style="left:38.4px;top:338px;width:57.4px;height:37.5px;background:#007acc;border-radius:19px;"></div>
<svg class="r" style="left:46px;top:346px;" width="12" height="20" viewBox="0 0 12 20"><path d="M8.2 2.1 V17.7" stroke="#ffffff" stroke-width="3.3" fill="none"/><path d="M2.9 6.1 L8.2 2.1 L8.6 5.8 L2.9 9.2 Z" fill="#ffffff"/></svg>
<div class="t s" style="left:58.90px;top:347.09px;font-size:19.5px;line-height:19.5px;color:#ffffff;font-weight:700;">K+</div>
<div class="r" style="left:0px;top:396px;width:4px;height:114px;background:#ffffff;"></div>
<svg class="r" style="left:24px;top:418px;" width="70" height="72" viewBox="0 0 70 72"><path d="M25.5 33 V8 L60.5 30.5 L50 37" stroke="#ffffff" stroke-width="3.4" fill="none" stroke-linejoin="miter"/></svg>
<svg class="r" style="left:24px;top:448px;" width="40" height="40" viewBox="0 0 40 40"><g fill="none" stroke="#ffffff" stroke-width="3.4"><path d="M12.4 13.5 A7.1 7.1 0 0 1 26.6 13.5"/><path d="M10.8 13.5 H28.2 M10.8 13.5 C10 19 10 24 13 28.5 C15 31.5 17 32.4 19.5 32.4 C22 32.4 24 31.5 26 28.5 C29 24 29 19 28.2 13.5"/><path d="M5.2 9.8 L10.8 14.8 M33.8 9.8 L28.2 14.8 M4.7 21.3 H10.3 M28.7 21.3 H34.3 M5.8 32.7 L11.6 27.5 M33.2 32.7 L27.4 27.5"/></g></svg>
<div class="r" style="left:58.1px;top:454px;width:38px;height:38px;border-radius:50%;background:#007acc;"></div>
<svg class="r" style="left:70px;top:462px;" width="14" height="20" viewBox="0 0 14 20"><path d="M9.6 2.3 V17.9" stroke="#ffffff" stroke-width="3.6" fill="none"/><path d="M2.6 7.2 L9.6 2.3 L10 6.2 L2.6 10.4 Z" fill="#ffffff"/></svg>
<svg class="r" style="left:26px;top:535px;" width="66" height="64" viewBox="0 0 66 64"><g fill="none" stroke="#858585" stroke-width="3.4" stroke-linejoin="round"><path d="M4.7 16 H24.5 V37.7 H47.1 V58.5 H4.7 Z"/><path d="M4.7 37.7 H24.5 V58.5"/><rect x="37.4" y="5.4" width="20.9" height="20.9" rx="2.5"/></g></svg>
<div class="t s" style="left:1826.00px;top:1229.51px;font-size:18.3px;line-height:18.3px;color:rgba(210,210,210,0.55);text-shadow:0 0 2px rgba(0,0,0,0.6);">@稀土掘金技术社区</div>
</body></html>
